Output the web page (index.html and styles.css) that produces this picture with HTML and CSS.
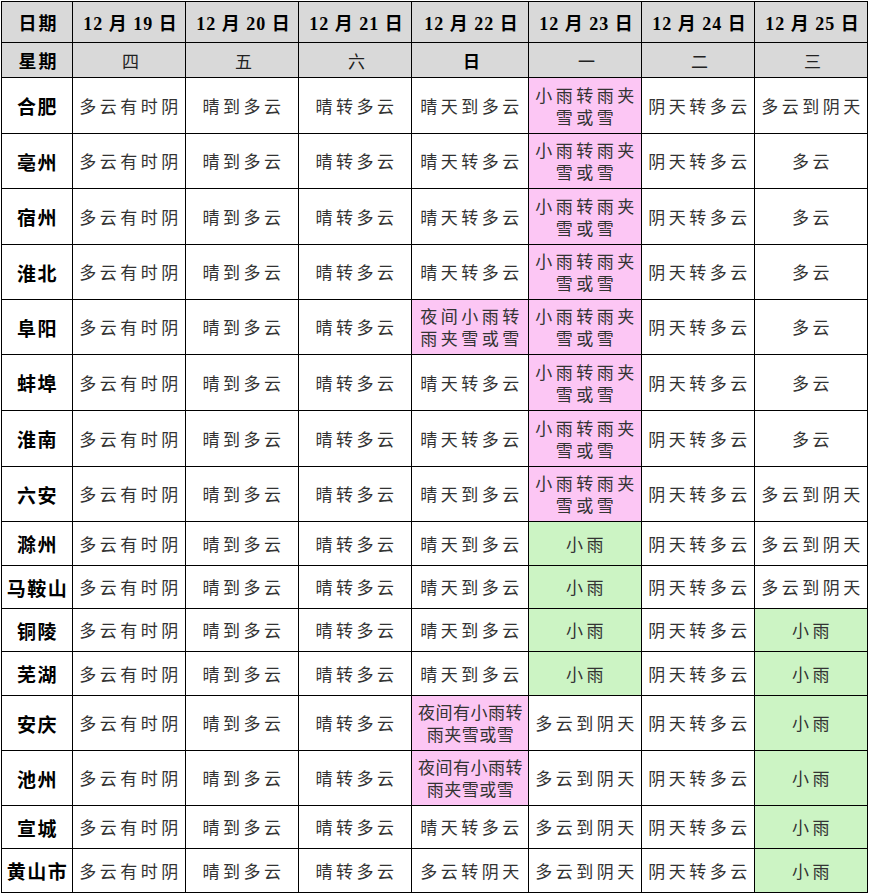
FILE: index.html
```html
<!DOCTYPE html>
<html lang="zh-CN">
<head>
<meta charset="utf-8">
<title>安徽各市天气预报</title>
<link rel="stylesheet" href="styles.css">
</head>
<body>
<table class="wx">
<colgroup>
<col class="c-city"><col class="c-day"><col class="c-day"><col class="c-day"><col class="c-wide"><col class="c-day"><col class="c-day"><col class="c-day">
</colgroup>
<thead>
<tr class="h1">
<th class="lbl">日期</th><th>12 月 19 日</th><th>12 月 20 日</th><th>12 月 21 日</th><th>12 月 22 日</th><th>12 月 23 日</th><th>12 月 24 日</th><th>12 月 25 日</th>
</tr>
<tr class="h2">
<th class="lbl">星期</th><th class="wd">四</th><th class="wd">五</th><th class="wd">六</th><th class="wd b">日</th><th class="wd">一</th><th class="wd">二</th><th class="wd">三</th>
</tr>
</thead>
<tbody>
<tr class="tall r56"><th>合肥</th><td>多云有时阴</td><td>晴到多云</td><td>晴转多云</td><td>晴天到多云</td><td class="pink">小雨转雨夹雪或雪</td><td>阴天转多云</td><td>多云到阴天</td></tr>
<tr class="tall r55"><th>亳州</th><td>多云有时阴</td><td>晴到多云</td><td>晴转多云</td><td>晴天转多云</td><td class="pink">小雨转雨夹雪或雪</td><td>阴天转多云</td><td>多云</td></tr>
<tr class="tall r56"><th>宿州</th><td>多云有时阴</td><td>晴到多云</td><td>晴转多云</td><td>晴天转多云</td><td class="pink">小雨转雨夹雪或雪</td><td>阴天转多云</td><td>多云</td></tr>
<tr class="tall r55"><th>淮北</th><td>多云有时阴</td><td>晴到多云</td><td>晴转多云</td><td>晴天转多云</td><td class="pink">小雨转雨夹雪或雪</td><td>阴天转多云</td><td>多云</td></tr>
<tr class="tall r55"><th>阜阳</th><td>多云有时阴</td><td>晴到多云</td><td>晴转多云</td><td class="pink">夜间小雨转雨夹雪或雪</td><td class="pink">小雨转雨夹雪或雪</td><td>阴天转多云</td><td>多云</td></tr>
<tr class="tall r56"><th>蚌埠</th><td>多云有时阴</td><td>晴到多云</td><td>晴转多云</td><td>晴天转多云</td><td class="pink">小雨转雨夹雪或雪</td><td>阴天转多云</td><td>多云</td></tr>
<tr class="tall r56"><th>淮南</th><td>多云有时阴</td><td>晴到多云</td><td>晴转多云</td><td>晴天转多云</td><td class="pink">小雨转雨夹雪或雪</td><td>阴天转多云</td><td>多云</td></tr>
<tr class="tall r55"><th>六安</th><td>多云有时阴</td><td>晴到多云</td><td>晴转多云</td><td>晴天到多云</td><td class="pink">小雨转雨夹雪或雪</td><td>阴天转多云</td><td>多云到阴天</td></tr>
<tr class="short r44"><th>滁州</th><td>多云有时阴</td><td>晴到多云</td><td>晴转多云</td><td>晴天到多云</td><td class="green">小雨</td><td>阴天转多云</td><td>多云到阴天</td></tr>
<tr class="short r43"><th>马鞍山</th><td>多云有时阴</td><td>晴到多云</td><td>晴转多云</td><td>晴天到多云</td><td class="green">小雨</td><td>阴天转多云</td><td>多云到阴天</td></tr>
<tr class="short r43"><th>铜陵</th><td>多云有时阴</td><td>晴到多云</td><td>晴转多云</td><td>晴天到多云</td><td class="green">小雨</td><td>阴天转多云</td><td class="green">小雨</td></tr>
<tr class="short r44"><th>芜湖</th><td>多云有时阴</td><td>晴到多云</td><td>晴转多云</td><td>晴天到多云</td><td class="green">小雨</td><td>阴天转多云</td><td class="green">小雨</td></tr>
<tr class="tall r55"><th>安庆</th><td>多云有时阴</td><td>晴到多云</td><td>晴转多云</td><td class="pink tight">夜间有小雨转雨夹雪或雪</td><td>多云到阴天</td><td>阴天转多云</td><td class="green">小雨</td></tr>
<tr class="tall r55"><th>池州</th><td>多云有时阴</td><td>晴到多云</td><td>晴转多云</td><td class="pink tight">夜间有小雨转雨夹雪或雪</td><td>多云到阴天</td><td>阴天转多云</td><td class="green">小雨</td></tr>
<tr class="short r43"><th>宣城</th><td>多云有时阴</td><td>晴到多云</td><td>晴转多云</td><td>晴天转多云</td><td>多云到阴天</td><td>阴天转多云</td><td class="green">小雨</td></tr>
<tr class="short r44"><th>黄山市</th><td>多云有时阴</td><td>晴到多云</td><td>晴转多云</td><td>多云转阴天</td><td>多云到阴天</td><td>阴天转多云</td><td class="green">小雨</td></tr>
</tbody>
</table>
</body>
</html>
```
FILE: styles.css
```css
html, body {
  margin: 0;
  padding: 0;
  background: #ffffff;
}

.wx {
  margin: 1px 0 0 1px;
  border-collapse: collapse;
  table-layout: fixed;
  width: 866px;
  font-family: "Noto Sans CJK SC", "Noto Sans", sans-serif;
  color: #333333;
}

.c-city { width: 71px; }
.c-day { width: 113px; }
.c-wide { width: 117px; }

.wx th, .wx td {
  border: 1px solid #000000;
  padding: 0 0 0 3px;
  text-align: center;
  vertical-align: middle;
  overflow: hidden;
}

.wx td {
  font-size: 17px;
  line-height: 22px;
  letter-spacing: 3.5px;
  font-weight: 400;
}

.wx tbody th {
  font-size: 19px;
  font-weight: 700;
  color: #000000;
  letter-spacing: 1.5px;
  padding-left: 1px;
}

.wx thead th {
  background: #d9d9d9;
  color: #000000;
}

.h1 th {
  height: 40px;
  font-family: "Liberation Serif", "Noto Sans CJK SC", serif;
  font-size: 18px;
  font-weight: 700;
  letter-spacing: 1px;
}

.h1 th.lbl, .h2 th.lbl {
  font-family: "Noto Sans CJK SC", sans-serif;
  font-size: 18px;
  letter-spacing: 2px;
  font-weight: 700;
}

.h2 th {
  height: 34px;
}

.h2 th.wd {
  font-size: 17px;
  font-weight: 400;
  color: #222222;
}

.h2 th.wd.b {
  font-weight: 700;
  color: #000000;
}

.r56 > * { height: 55px; }
.r55 > * { height: 54px; }
.r44 > * { height: 43px; }
.r43 > * { height: 42px; }

.pink { background: #fcc6f4; }
.green { background: #ccf4c4; }

.wx td.tight {
  letter-spacing: 0.5px;
  padding-left: 1px;
}
```
